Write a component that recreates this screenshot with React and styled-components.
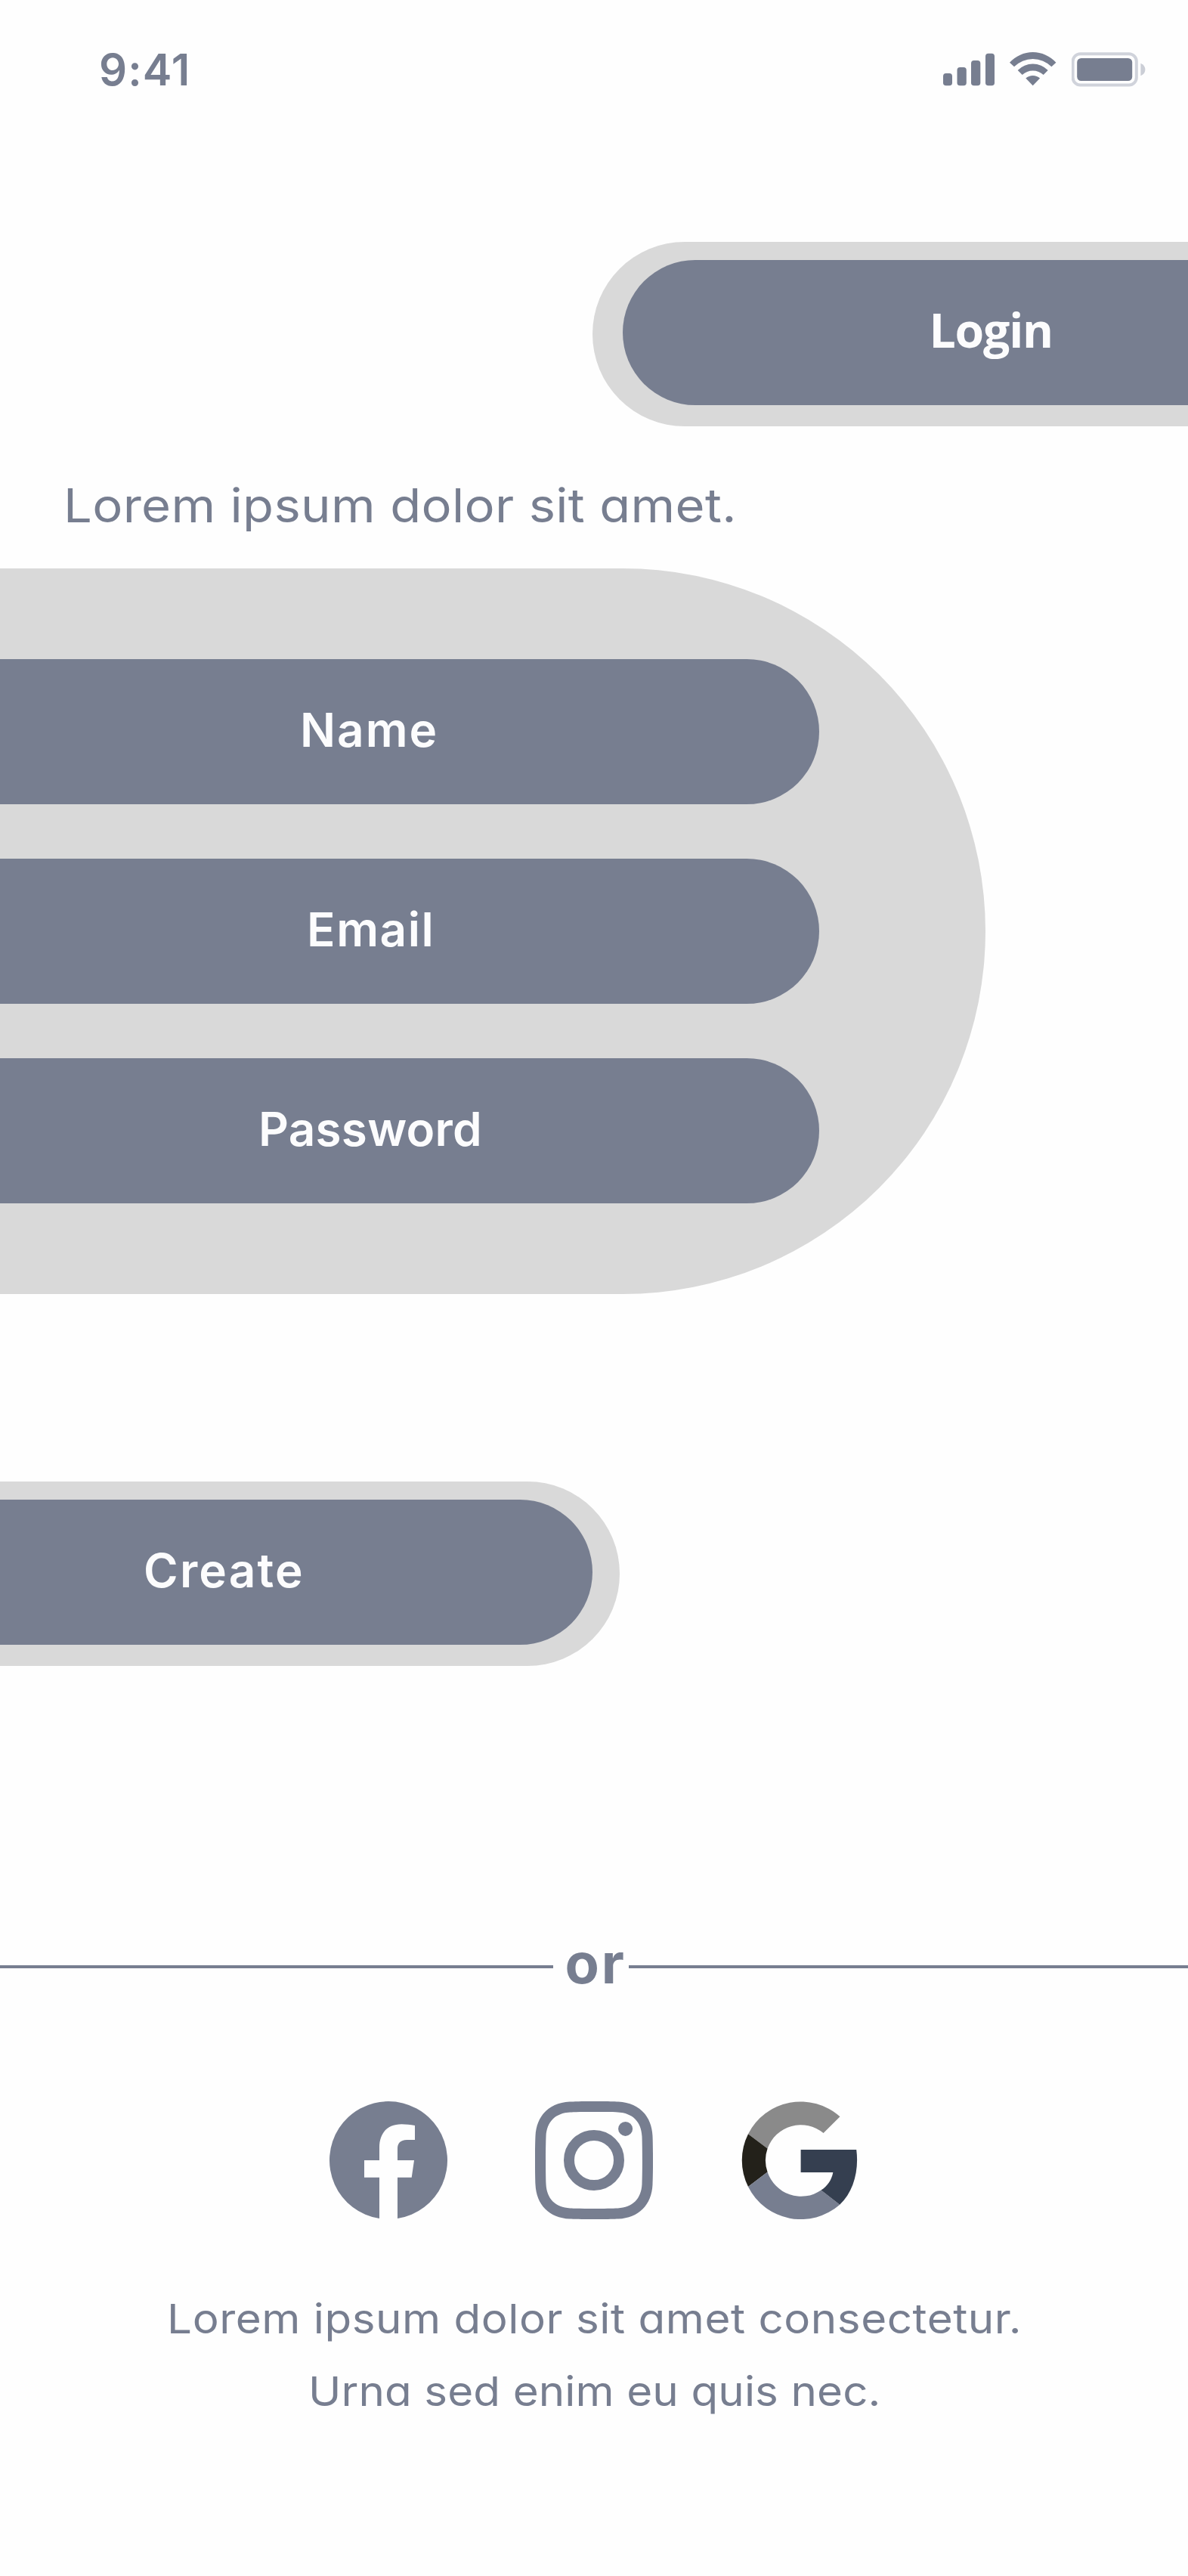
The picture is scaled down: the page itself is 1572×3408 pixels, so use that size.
import React from 'react';
import styled, { createGlobalStyle, css } from 'styled-components';

const slate = '#777e90';
const silver = '#d9d9d9';
const paper = '#fefefe';

const GlobalStyle = createGlobalStyle`
  *, *::before, *::after { box-sizing: border-box; }
  body {
    margin: 0;
    background: ${paper};
    font-family: Inter, "Liberation Sans", sans-serif;
    color: ${slate};
  }
`;

const Screen = styled.main`
  display: flex;
  flex-direction: column;
  width: 1572px;
  height: 3408px;
  overflow: hidden;
  background: ${paper};
`;

const StatusBar = styled.header`
  display: flex;
  justify-content: space-between;
  align-items: flex-start;
  height: 320px;
  padding: 56px 55px 0 131px;
`;

const Clock = styled.time`
  font-size: 58px;
  font-weight: 600;
  line-height: 72px;
  letter-spacing: 1.1px;
`;

const StatusIcons = styled.div`
  display: flex;
  align-items: flex-start;
  gap: 20px;
  padding-top: 13px;
`;

const Glyph = styled.svg`
  display: block;
  flex: none;
  fill: ${slate};
`;

const pillEnd = {
  left: css`border-radius: 122px 0 0 122px;`,
  right: css`border-radius: 0 122px 122px 0;`,
};

const PillFrame = styled.div`
  flex: none;
  display: flex;
  width: ${(p) => p.$width}px;
  height: 244px;
  padding: ${(p) => (p.$side === 'left' ? '24px 0 28px 40px' : '24px 36px 28px 0')};
  align-self: ${(p) => (p.$side === 'left' ? 'flex-end' : 'flex-start')};
  background: ${silver};
  ${(p) => pillEnd[p.$side]}
`;

const Pill = styled.button`
  display: flex;
  align-items: center;
  flex: none;
  width: ${(p) => p.$width || '100%'};
  height: 192px;
  border: 0;
  padding: 0 0 5px ${(p) => p.$indent}px;
  background: ${slate};
  color: #fcfcfd;
  font-family: Inter, "Liberation Sans", sans-serif;
  font-size: 62px;
  font-weight: 600;
  line-height: 80px;
  letter-spacing: ${(p) => p.$tracking}px;
  text-align: left;
  ${(p) => pillEnd[p.$side]}
`;

const LoginPill = styled(Pill)`
  padding-bottom: 8px;
  font-family: "Open Sans", "Noto Sans", sans-serif;
  font-size: 62.5px;
  font-weight: 700;
`;

const Tagline = styled.p`
  height: 188px;
  margin: 0;
  padding: 57px 0 0 83.5px;
  font-size: 62px;
  line-height: 96px;
  letter-spacing: 0.3px;
  font-feature-settings: "cv11";
  white-space: nowrap;
`;

const Wide = styled.span`
  display: inline-block;
  transform: scaleX(1.08);
  transform-origin: ${(p) => p.$from || 'center'};
`;

const FieldPanel = styled.form`
  flex: none;
  display: flex;
  flex-direction: column;
  gap: 72px;
  width: 1304px;
  height: 960px;
  margin-bottom: 248px;
  padding: 120px 0;
  background: ${silver};
  border-radius: 0 480px 480px 0;
`;

const Divider = styled.div`
  display: flex;
  align-items: center;
  height: 80px;
  margin-top: 353px;
`;

const Rule = styled.span`
  flex: ${(p) => (p.$width ? 'none' : '1')};
  width: ${(p) => p.$width || 0}px;
  height: 4px;
  margin-top: 10px;
  background: ${slate};
`;

const Or = styled.span`
  width: 100px;
  padding-left: 15.5px;
  font-size: 74px;
  font-weight: 700;
  line-height: 80px;
  letter-spacing: 2.9px;
`;

const SocialRow = styled.nav`
  display: flex;
  gap: 116px;
  margin-top: 143px;
  padding-left: 436px;
`;

const SocialIcon = styled(Glyph)`
  width: 156px;
  height: 156px;
`;

const Footnote = styled.footer`
  display: flex;
  flex-direction: column;
  align-items: center;
  margin-top: 84px;
  padding-left: 2px;
`;

const FootLine = styled.p`
  margin: 0;
  font-size: 54px;
  line-height: 96px;
  letter-spacing: ${(p) => p.$tracking}px;
  font-feature-settings: "cv11";
  white-space: nowrap;
`;

const fields = [
  { label: 'Name', indent: 397, tracking: 2 },
  { label: 'Email', indent: 406, tracking: 1.6 },
  { label: 'Password', indent: 342, tracking: 0.25 },
];

const Signal = () => (
  <Glyph width="68" height="46" viewBox="0 0 68 46">
    <rect x="0" y="28" width="12" height="16.3" rx="3.8" />
    <rect x="18.5" y="20" width="12.3" height="24.3" rx="3.8" />
    <rect x="37" y="11" width="12.3" height="33.3" rx="3.8" />
    <rect x="56" y="1.7" width="12" height="42.6" rx="3.8" />
  </Glyph>
);

const Wifi = () => (
  <Glyph width="62" height="46" viewBox="0 0 62 46">
    <path d="M0 13.7A41.4 41.4 0 0 1 61.4 13.7L55.4 19.3A34.8 34.8 0 0 0 6 19.3Z" />
    <path d="M10.7 24A28 28 0 0 1 50.7 24L44.7 30A20.5 20.5 0 0 0 16.7 30Z" />
    <path d="M21.3 34.5A14.2 14.2 0 0 1 40.1 34.5L30.7 44.2Z" />
  </Glyph>
);

const Battery = () => (
  <Glyph width="99" height="46" viewBox="0.6 0 99 46">
    <rect x="2.2" y="2.2" width="84.2" height="41.3" rx="10" fill="none" stroke="#d0d3db" strokeWidth="4" />
    <rect x="7.8" y="8" width="73" height="30" rx="5.5" />
    <path d="M92 14.7C96 16.3 98 19.4 98 23S96 29.7 92 31.3Z" fill="#cbced6" />
  </Glyph>
);

const Facebook = () => (
  <SocialIcon viewBox="0 0 156 156">
    <path d="M66 155.1A78 78 0 1 1 90 155.1V100.7H108.7L112 78H90V62.8C90 56 93.5 51 102.5 51H113V32C107 31 101 30.3 95.5 30.3C77 30.3 66 41.5 66 61V78H46V100.7H66Z" />
  </SocialIcon>
);

const Instagram = () => (
  <SocialIcon viewBox="0 0 156 156">
    <path
      fillRule="evenodd"
      d="M45.8 .5C60 -.2 96 -.2 110.2 .5C137 1.7 154.3 19 155.5 45.8C156.2 60 156.2 96 155.5 110.2C154.3 137 137 154.3 110.2 155.5C96 156.2 60 156.2 45.8 155.5C19 154.3 1.7 137 .5 110.2C-.2 96 -.2 60 .5 45.8C1.7 19 19 1.7 45.8 .5ZM46.4 14.5C27 15.4 15.4 27 14.5 46.4C13.9 60 13.9 96 14.5 109.6C15.4 129 27 140.6 46.4 141.5C60 142.1 96 142.1 109.6 141.5C129 140.6 140.6 129 141.5 109.6C142.1 96 142.1 60 141.5 46.4C140.6 27 129 15.4 109.6 14.5C96 13.9 60 13.9 46.4 14.5Z"
    />
    <circle cx="78" cy="78" r="33" fill="none" stroke={slate} strokeWidth="14" />
    <circle cx="119.6" cy="36.4" r="9.5" />
  </SocialIcon>
);

const Google = () => (
  <SocialIcon viewBox="0 0 156 156">
    <path fill="#8a8a8a" d="M10 43.2A78 78 0 0 1 131.5 20.3L109.6 42.1A46.8 46.8 0 0 0 35.6 62.5Z" />
    <path fill="#23211a" d="M10 43.2A78 78 0 0 0 10 113L35.6 93.5A46.8 46.8 0 0 1 35.6 62.5Z" />
    <path fill={slate} d="M10 113A78 78 0 0 0 131.2 136.7L106.5 117.6A46.8 46.8 0 0 1 35.6 93.5Z" />
    <path fill="#353f50" d="M79.6 64H153.2C156.8 91 149.5 120 131.2 136.7L106.5 117.6C115 112 120.5 104 122.3 94H79.6Z" />
  </SocialIcon>
);

export default function App() {
  return (
    <>
      <GlobalStyle />
      <Screen>
        <StatusBar>
          <Clock>9:41</Clock>
          <StatusIcons>
            <Signal />
            <Wifi />
            <Battery />
          </StatusIcons>
        </StatusBar>

        <PillFrame $side="left" $width={788}>
          <LoginPill $side="left" $indent={405.5} $tracking={-1.2}>Login</LoginPill>
        </PillFrame>

        <Tagline>
          <Wide $from="left">Lorem ipsum dolor sit amet.</Wide>
        </Tagline>

        <FieldPanel>
          {fields.map((f) => (
            <Pill key={f.label} type="button" $side="right" $width="1084px" $indent={f.indent} $tracking={f.tracking}>
              {f.label}
            </Pill>
          ))}
        </FieldPanel>

        <PillFrame $side="right" $width={820}>
          <Pill $side="right" $indent={190} $tracking={2.2}>Create</Pill>
        </PillFrame>

        <Divider>
          <Rule $width={732} />
          <Or>or</Or>
          <Rule />
        </Divider>

        <SocialRow>
          <Facebook />
          <Instagram />
          <Google />
        </SocialRow>

        <Footnote>
          <FootLine $tracking={0.5}>
            <Wide>Lorem ipsum dolor sit amet consectetur.</Wide>
          </FootLine>
          <FootLine $tracking={0.1}>
            <Wide>Urna sed enim eu quis nec.</Wide>
          </FootLine>
        </Footnote>
      </Screen>
    </>
  );
}
